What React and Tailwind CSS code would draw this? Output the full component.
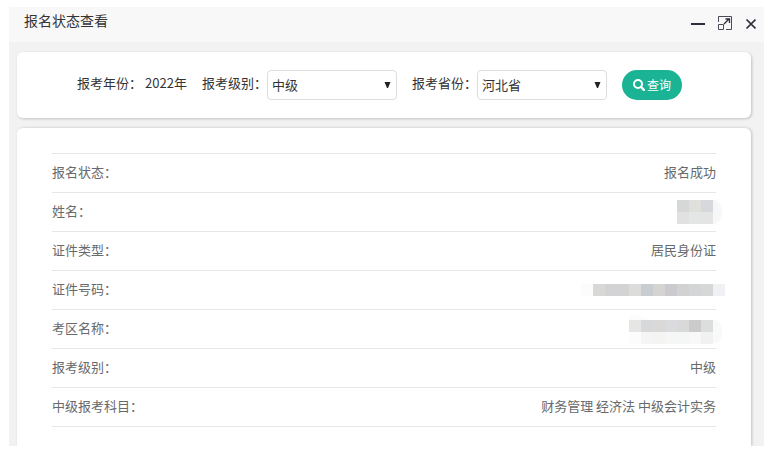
import { useState } from 'react';

const LEVELS = ['初级', '中级', '高级'];
const PROVINCES = ['北京市', '天津市', '河北省', '山西省'];

// each mask is a list of rows, one colour per 12px cell
const MASKS = {
  name: {
    label: '姓名已隐藏',
    top: 0,
    rows: [
      ['#d6d8d7', '#dfdfdc', '#d7d8dc'],
      ['#e1e1e2', '#e4e5e5', '#e4e4e4'],
    ],
    halo: <path d="M36 0a9 12 0 0 1 0 24z" fill="#f5f7f9" />,
  },
  idNumber: {
    label: '证件号码已隐藏',
    top: 0,
    rows: [
      ['#fcfcfc', '#d8d8d6', '#d3d3d5', '#d3d3d3', '#dcdcda', '#c9ccd0', '#d5d4d3', '#cacacf', '#d2d2d2', '#d4d5d7', '#d6d8d8', '#f0f1f4'],
    ],
  },
  area: {
    label: '考区名称已隐藏',
    top: 6,
    rows: [
      ['#e6e6e4', '#d6d8d9', '#dad9d8', '#dadbdf', '#d9d9d9', '#cbcbcb', '#dcdedd'],
      ['#fcfcfc', '#f5f5f5', '#f4f4f3', '#f6f6f6', '#f5f6f6', '#f8f8f8', '#f2f1f2'],
    ],
    halo: (
      <>
        <path d="M0 6V2q8-3 16 2l6 2z" fill="#fcfcfc" />
        <path d="M84 6h3a9 12 0 0 1 0 23h-3z" fill="#f8faf9" />
      </>
    ),
  },
};

const ROWS = [
  { label: '报名状态：', value: '报名成功' },
  { label: '姓名：', mask: 'name' },
  { label: '证件类型：', value: '居民身份证' },
  { label: '证件号码：', mask: 'idNumber' },
  { label: '考区名称：', mask: 'area' },
  { label: '报考级别：', value: '中级' },
  { label: '中级报考科目：', value: '财务管理 经济法 中级会计实务' },
];

function Mask({ type }) {
  const { label, top, rows, halo } = MASKS[type];
  const width = rows[0].length * 12 + (halo ? 12 : 0);
  const height = rows.length * 12 + top;
  return (
    <svg
      role="img"
      aria-label={label}
      width={width}
      height={height}
      viewBox={`0 0 ${width} ${height}`}
      className="-mr-[9px] ml-auto"
    >
      {halo}
      {rows.map((row, y) =>
        row.map((color, x) => (
          <rect key={`${x}-${y}`} x={x * 12} y={y * 12 + top} width="12" height="12" fill={color} />
        ))
      )}
    </svg>
  );
}

function SelectField({ id, label, value, onChange, options }) {
  return (
    <div className="flex items-center">
      <label htmlFor={id} className="pb-1">{label}</label>
      <div className="relative">
        <select
          id={id}
          value={value}
          onChange={(e) => onChange(e.target.value)}
          className="block h-[30px] w-[130px] appearance-none rounded border border-[#dddddd] bg-white pr-5 pl-1 text-[#333333]"
        >
          {options.map((o) => (
            <option key={o} value={o}>{o}</option>
          ))}
        </select>
        <svg viewBox="0 0 7 7" className="pointer-events-none absolute top-3 right-1.5 size-[7px]" fill="#222222">
          <path d="M.5 0h6L4 6H3z" />
        </svg>
      </div>
    </div>
  );
}

export default function App() {
  const [level, setLevel] = useState('中级');
  const [province, setProvince] = useState('河北省');

  return (
    <div className="bg-white pt-[7px] pr-[15px] pb-2 pl-[9px] font-['Noto_Sans_CJK_SC',sans-serif] text-[13px] leading-5 text-[#333333]">
      <div className="overflow-hidden bg-[#f2f2f2]">
        <header className="flex h-[35px] items-center justify-between bg-[#f8f8f8] pr-2 pl-[15px]">
          <h1 className="pb-2.5 text-sm">报名状态查看</h1>
          <div className="flex items-center gap-3 pb-1 text-[#2e2d3c]">
            <button type="button" aria-label="最小化">
              <svg width="15" height="15" viewBox="0 0 15 15" className="block" fill="currentColor">
                <path d="M0 8h14v2H0z" />
              </svg>
            </button>
            <button type="button" aria-label="最大化">
              <svg width="15" height="15" viewBox="0 0 15 15" className="block" fill="none" stroke="currentColor">
                <path d="M.5 7V1.5h13v13H8M.5 9.5h5v5h-5z" strokeOpacity="0.85" />
                <path d="M6 9l5-5M7.500 4h4v4" strokeWidth="1.300" />
              </svg>
            </button>
            <button type="button" aria-label="关闭">
              <svg width="11" height="15" viewBox="0 0 11 15" className="block" fill="none" stroke="currentColor" strokeWidth="1.700">
                <path d="M1.500 4.500l9 9M10.500 4.500l-9 9" />
              </svg>
            </button>
          </div>
        </header>

        <main className="pt-2.5 pr-[13px] pl-2">
          <form
            onSubmit={(e) => e.preventDefault()}
            className="flex h-[66px] items-center gap-[15px] rounded-md bg-white pl-[60px] whitespace-nowrap shadow-[1px_1px_3px_rgba(0,0,0,0.2)]"
          >
            <div className="flex gap-[3px] pb-1">
              <span>报考年份：</span>
              <span>2022年</span>
            </div>
            <SelectField id="level" label="报考级别：" value={level} onChange={setLevel} options={LEVELS} />
            <SelectField id="province" label="报考省份：" value={province} onChange={setProvince} options={PROVINCES} />
            <button
              type="submit"
              className="flex h-[30px] w-[60px] items-center justify-center gap-0.5 rounded-full bg-[#1ab394] pb-px text-xs text-white"
            >
              <svg width="12" height="12" viewBox="0 0 12 12" fill="none" stroke="currentColor">
                <circle cx="5" cy="5" r="4" strokeWidth="2" />
                <path d="M8 8l3 3" strokeWidth="2.400" strokeLinecap="round" />
              </svg>
              查询
            </button>
          </form>

          <section className="mt-2.5 rounded-t-md bg-white px-[35px] pt-[25px] pb-[19px] shadow-[1px_0_3px_rgba(0,0,0,0.2)]">
            <table className="w-full border-collapse border-b border-[#e7e7e7] text-[#676a6c]">
              <tbody>
                {ROWS.map((row) => (
                  <tr key={row.label} className="h-[39px] border-t border-[#e7e7e7]">
                    <th scope="row" className="p-0 pb-0.5 text-left font-normal">{row.label}</th>
                    <td className={row.mask ? 'p-0' : 'p-0 pb-0.5 text-right'}>
                      {row.mask ? <Mask type={row.mask} /> : row.value}
                    </td>
                  </tr>
                ))}
              </tbody>
            </table>
          </section>
        </main>
      </div>
    </div>
  );
}
